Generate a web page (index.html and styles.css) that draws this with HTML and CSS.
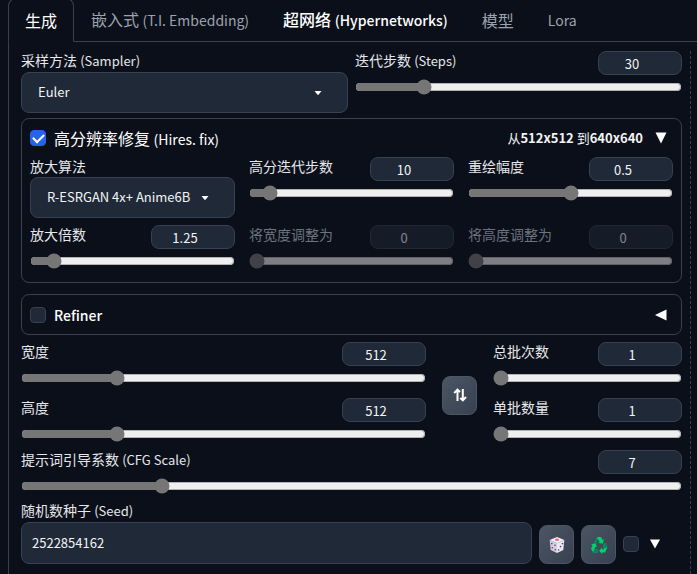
FILE: index.html
```html
<!DOCTYPE html>
<html lang="zh-CN">
    <head>
        <meta charset="utf-8">
        <title>Stable Diffusion</title>
        <link rel="stylesheet" href="styles.css">
    </head>
    <body>
        <nav class="tabs">
            <button class="tab active">生成</button>
            <button class="tab">嵌入式 <span class="en">(T.I. Embedding)</span></button>
            <button class="tab hot">超网络 <span class="en">(Hypernetworks)</span></button>
            <button class="tab">模型</button>
            <button class="tab"><span class="en">Lora</span></button>
            <span class="rest"></span>
        </nav>
        <main class="panel">
            <div class="settings">
                <div class="row two">
                    <div class="field">
                        <label for="sampler">采样方法 <span class="en">(Sampler)</span></label>
                        <div class="dropdown">
                            <select id="sampler"><option>Euler</option></select>
                            <svg width="8" height="4" viewBox="0 0 8 4"><path d="M0.5 0h7L4.5 3.7h-1z" fill="#fff"/></svg>
                        </div>
                    </div>
                    <div class="slider">
                        <label for="steps">迭代步数 <span class="en">(Steps)</span></label>
                        <input type="number" id="steps" value="30">
                        <input type="range" aria-label="迭代步数" min="1" max="150" value="30">
                    </div>
                </div>

                <section class="box hires">
                    <div class="head">
                        <input type="checkbox" id="hires" checked>
                        <label for="hires">高分辨率修复 <span class="en">(Hires. fix)</span></label>
                        <span class="size">从<b>512x512</b> 到<b>640x640</b></span>
                        <svg width="12" height="12" viewBox="0 0 12 12"><path d="M0.5 0.5h11L6 11.5z" fill="#fff"/></svg>
                    </div>
                    <div class="row three">
                        <div class="field">
                            <label for="upscaler">放大算法</label>
                            <div class="dropdown">
                                <select id="upscaler"><option>R-ESRGAN 4x+ Anime6B</option></select>
                                <svg width="8" height="4" viewBox="0 0 8 4"><path d="M0.5 0h7L4.5 3.7h-1z" fill="#fff"/></svg>
                            </div>
                        </div>
                        <div class="slider">
                            <label for="hrsteps">高分迭代步数</label>
                            <input type="number" id="hrsteps" value="10">
                            <input type="range" aria-label="高分迭代步数" min="0" max="150" value="10">
                        </div>
                        <div class="slider">
                            <label for="denoise">重绘幅度</label>
                            <input type="number" id="denoise" value="0.5" step="0.01">
                            <input type="range" aria-label="重绘幅度" min="0" max="1" step="0.01" value="0.5">
                        </div>
                        <div class="slider">
                            <label for="scale">放大倍数</label>
                            <input type="number" id="scale" value="1.25" step="0.05">
                            <input type="range" aria-label="放大倍数" min="1" max="4" step="0.05" value="1.25">
                        </div>
                        <div class="slider off">
                            <label for="rw">将宽度调整为</label>
                            <input type="number" id="rw" value="0">
                            <input type="range" aria-label="将宽度调整为" min="0" max="2048" value="0">
                        </div>
                        <div class="slider off">
                            <label for="rh">将高度调整为</label>
                            <input type="number" id="rh" value="0">
                            <input type="range" aria-label="将高度调整为" min="0" max="2048" value="0">
                        </div>
                    </div>
                </section>

                <section class="box refiner">
                    <div class="head">
                        <input type="checkbox" id="refiner">
                        <label for="refiner"><span class="en">Refiner</span></label>
                        <svg width="12" height="12" viewBox="0 0 12 12"><path d="M11.5 0.5v11L0 6z" fill="#fff"/></svg>
                    </div>
                </section>

                <div class="dims">
                    <div class="stack">
                        <div class="slider">
                            <label for="width">宽度</label>
                            <input type="number" id="width" value="512">
                            <input type="range" aria-label="宽度" min="64" max="2048" step="8" value="512">
                        </div>
                        <div class="slider">
                            <label for="height">高度</label>
                            <input type="number" id="height" value="512">
                            <input type="range" aria-label="高度" min="64" max="2048" step="8" value="512">
                        </div>
                    </div>
                    <button class="tool" aria-label="swap">
                        <svg width="14" height="14" viewBox="0 0 14 14" fill="none" stroke="#fff" stroke-width="2"><path d="M4.5 13V2M1.2 5l3.3-3.4L7 4M9.8 1v11M7.3 10l2.5 2.4L13 9"/></svg>
                    </button>
                    <div class="stack">
                        <div class="slider">
                            <label for="count">总批次数</label>
                            <input type="number" id="count" value="1">
                            <input type="range" aria-label="总批次数" min="1" max="100" value="1">
                        </div>
                        <div class="slider">
                            <label for="batch">单批数量</label>
                            <input type="number" id="batch" value="1">
                            <input type="range" aria-label="单批数量" min="1" max="8" value="1">
                        </div>
                    </div>
                </div>

                <div class="slider cfg">
                    <label for="cfg">提示词引导系数 <span class="en">(CFG Scale)</span></label>
                    <input type="number" id="cfg" value="7">
                    <input type="range" aria-label="提示词引导系数" min="1" max="30" step="0.5" value="7">
                </div>

                <div class="seed">
                    <div class="field">
                        <label for="seed">随机数种子 <span class="en">(Seed)</span></label>
                        <input type="text" id="seed" value="2522854162">
                    </div>
                    <button class="tool" aria-label="random">
                        <svg width="18" height="18" viewBox="0 0 18 18">
                            <path d="M9 1l7.3 3L9 7.2 1.7 4z" fill="#f4f0f8"/>
                            <path d="M1.7 4L9 7.2V17l-6.3-3z" fill="#d8cce0"/>
                            <path d="M16.3 4L9 7.2V17l6.3-3z" fill="#ece5f2"/>
                            <ellipse cx="9" cy="3.7" rx="2" ry="1.2" fill="#f8696b"/>
                            <g fill="#4b3f63"><circle cx="3.8" cy="7.6" r=".8"/><circle cx="7" cy="9.2" r=".8"/><circle cx="4.3" cy="11.8" r=".8"/><circle cx="7.2" cy="13.7" r=".8"/><circle cx="14.5" cy="7.6" r=".8"/><circle cx="12.5" cy="10.6" r=".8"/><circle cx="10.6" cy="14" r=".8"/></g>
                        </svg>
                    </button>
                    <button class="tool" aria-label="reuse">
                        <svg width="18" height="18" viewBox="0 0 18 18">
                            <path d="M6.2 2.2L8 1h3l1.7 3 1.4-.7-1.5 4.5-4.3-1 1.4-.8L8.2 3.5z" fill="#00d26a"/>
                            <path d="M6.2 2.2L8.2 3.5 6.4 7.8 3.8 6.3z" fill="#008463"/>
                            <path d="M1.2 8.3l4.5-1 1.2 4.3-1.5-.8-1.2 2.7h3.4v3H3.3L1 12.8l1.5-3z" fill="#00d26a"/>
                            <path d="M4.2 13.5h3.4v3H3.3z" fill="#008463"/>
                            <path d="M13 8.5L15.5 7l1.8 4.2-2.2 5.3h-3V18l-3-3.3 3-3.2v1.8h2.1z" fill="#00d26a"/>
                            <path d="M13 8.5L15.5 7l1.8 4.2-2.8 1z" fill="#008463"/>
                        </svg>
                    </button>
                    <input type="checkbox" aria-label="extra">
                    <svg class="more" width="10" height="10" viewBox="0 0 10 10"><path d="M0 0.5h10L5 9.5z" fill="#fff"/></svg>
                </div>
            </div>
        </main>
    </body>
</html>
```
FILE: styles.css
```css
* {
    box-sizing: border-box;
}
body {
    margin: 0 0 0 8px;
    min-height: 100vh;
    display: flex;
    flex-direction: column;
    background-color: #0b0f19;
    color: #f3f4f6;
    font-family: "Noto Sans CJK SC", sans-serif;
    font-size: 14px;
    line-height: 18px;
}
button, input, select {
    font: inherit;
    color: inherit;
    margin: 0;
}
svg {
    display: block;
    flex: none;
}

/* tabs */
.tabs {
    display: flex;
    height: 44px;
    margin-top: -2px;
    white-space: nowrap;
}
.tab {
    background: none;
    border: none;
    border-bottom: 1px solid #374151;
    padding: 0 17px;
    font-size: 16px;
    color: #9ca3af;
}
.tab.active {
    padding: 0 16px;
    color: #fff;
    border: 1px solid #374151;
    border-bottom-color: transparent;
    border-radius: 8px 8px 0 0;
}
.tab.hot {
    color: #fff;
    font-weight: 500;
}
.tab .en, .head .en {
    font-size: 14px;
}
.rest {
    flex: 1;
    border-bottom: 1px solid #374151;
}

/* main column */
.panel {
    flex: 1;
    display: flex;
    border-left: 1px solid #374151;
    padding: 9px 6px 0 12px;
}
.settings {
    flex: 1;
    padding-right: 8px;
    border-right: 1px dashed #374151;
}
label {
    color: #e5e7eb;
    white-space: nowrap;
}
.en {
    font-size: 13px;
}
.row {
    display: grid;
}
.two {
    grid-template-columns: 1fr 1fr;
    column-gap: 7px;
}
.three {
    grid-template-columns: 1fr 1fr 1fr;
    column-gap: 14px;
    row-gap: 7px;
}
.field label {
    display: block;
    margin-bottom: 2px;
}
.dropdown {
    position: relative;
}
.dropdown svg {
    position: absolute;
    right: 26px;
    top: 19px;
    pointer-events: none;
}
select, input[type="text"], input[type="number"] {
    background-color: #1f2937;
    border: 1px solid #374151;
    border-radius: 8px;
    font-size: 13px;
}
select, input[type="text"] {
    display: block;
    width: 100%;
    height: 42px;
    padding-bottom: 2px;
}
select {
    appearance: none;
    height: 41px;
    padding: 0 16px 2px;
}
input[type="text"] {
    padding: 0 10px 2px;
}
input[type="number"] {
    width: 84px;
    height: 24px;
    padding: 0 16px 0 0;
    text-align: center;
    appearance: textfield;
}
input[type="number"]::-webkit-inner-spin-button {
    display: none;
}

/* sliders */
.slider {
    display: grid;
    grid-template-columns: 1fr auto;
    align-content: start;
    row-gap: 4px;
}
.slider input[type="range"] {
    grid-column: 1 / 3;
    width: 100%;
    height: 16px;
    accent-color: #767676;
}
.off label {
    color: #6b7280;
}
.off input {
    opacity: 0.5;
    pointer-events: none;
}

/* boxes */
.box {
    border: 1px solid #374151;
    border-radius: 8px;
    padding: 0 8px;
}
.hires {
    margin-top: 5px;
    padding-bottom: 13px;
}
.refiner {
    margin-top: 11px;
}
.head {
    display: flex;
    align-items: center;
    height: 38px;
    padding-right: 6px;
}
.refiner .head {
    height: 39px;
}
.head label {
    flex: 1;
    margin-left: 8px;
    font-size: 16px;
    color: #fff;
}
.refiner label {
    font-weight: 500;
}
.size {
    margin-right: 12px;
    font-size: 13px;
}
input[type="checkbox"] {
    appearance: none;
    flex: none;
    width: 16px;
    height: 16px;
    background-color: #1f2937;
    border: 1px solid #374151;
    border-radius: 4px;
}
input[type="checkbox"]:checked {
    background-color: #2563eb;
    border-color: #2563eb;
    display: grid;
    place-items: center;
}
input[type="checkbox"]:checked::before {
    content: "";
    width: 9px;
    height: 5px;
    border: solid #fff;
    border-width: 0 0 2px 2px;
    transform: rotate(-45deg) translate(1px, -1px);
}

.dims {
    display: flex;
    align-items: center;
    gap: 16px;
    margin-top: 7px;
}
.stack {
    display: grid;
    row-gap: 12px;
    flex: 15;
}
.stack:last-child {
    flex: 7;
}
.tool {
    flex: none;
    display: grid;
    place-items: center;
    width: 35px;
    height: 39px;
    padding: 0;
    border: 1px solid #4b5563;
    border-radius: 8px;
    background: linear-gradient(to bottom right, #4b5563, #374151);
}
.dims .tool {
    margin-top: 6px;
}
.cfg {
    margin-top: 8px;
}
.seed {
    display: flex;
    align-items: flex-end;
    gap: 7px;
    margin-top: 7px;
}
.seed .field {
    flex: 1;
}
.seed input[type="checkbox"] {
    margin-bottom: 12px;
}
.more {
    margin: 0 22px 15px 4px;
}
```
